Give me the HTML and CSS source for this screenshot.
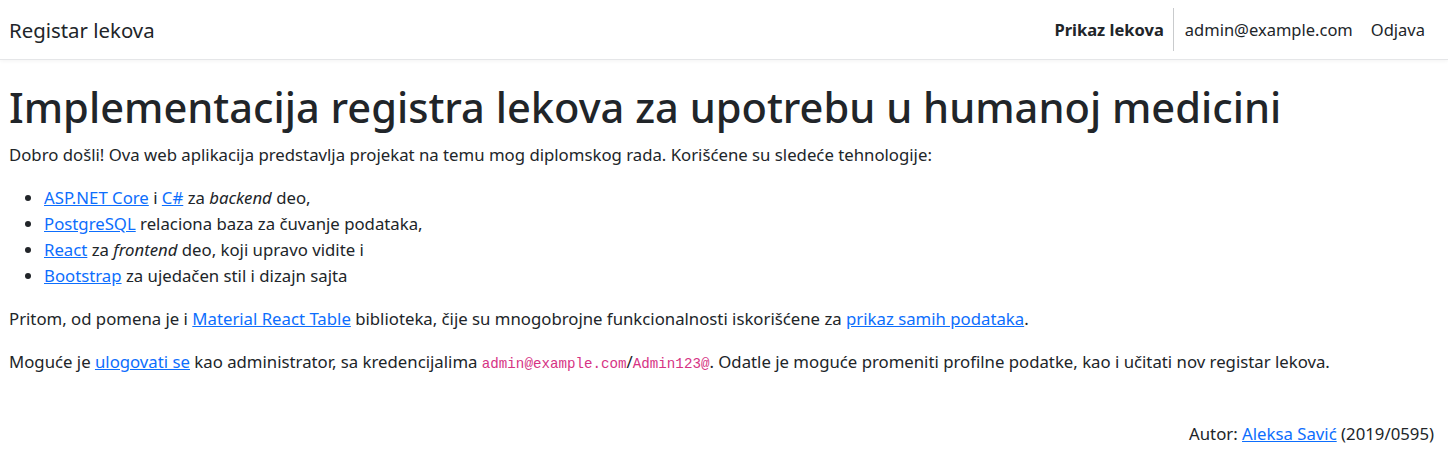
FILE: index.html
```html
<!DOCTYPE html>
<html lang="sr">
<head>
<meta charset="utf-8">
<title>Registar lekova</title>
<link rel="stylesheet" href="styles.css">
</head>
<body>
<header class="navbar">
  <a class="brand" href="#">Registar lekova</a>
  <nav class="nav">
    <a class="nav-link active" href="#">Prikaz lekova</a>
    <span class="nav-divider"></span>
    <a class="nav-link" href="#">admin@example.com</a>
    <a class="nav-link" href="#">Odjava</a>
  </nav>
</header>
<main class="content">
  <h1 class="title">Implementacija registra lekova za upotrebu u humanoj medicini</h1>
  <p class="para">Dobro došli! Ova web aplikacija predstavlja projekat na temu mog diplomskog rada. Korišćene su sledeće tehnologije:</p>
  <ul class="tech-list">
    <li><a href="#">ASP.NET Core</a> i <a href="#">C#</a> za <em>backend</em> deo,</li>
    <li><a href="#">PostgreSQL</a> relaciona baza za čuvanje podataka,</li>
    <li><a href="#">React</a> za <em>frontend</em> deo, koji upravo vidite i</li>
    <li><a href="#">Bootstrap</a> za ujedačen stil i dizajn sajta</li>
  </ul>
  <p class="para">Pritom, od pomena je i <a href="#">Material React Table</a> biblioteka, čije su mnogobrojne funkcionalnosti iskorišćene za <a href="#">prikaz samih podataka</a>.</p>
  <p class="para">Moguće je <a href="#">ulogovati se</a> kao administrator, sa kredencijalima <code class="code">admin@example.com</code>/<code class="code">Admin123@</code>. Odatle je moguće promeniti profilne podatke, kao i učitati nov registar lekova.</p>
</main>
<footer class="footer">Autor: <a href="#">Aleksa Savić</a> (2019/0595)</footer>
</body>
</html>
```

FILE: styles.css
```css
html, body {
  margin: 0;
  padding: 0;
  background: #fff;
}
body {
  font-family: "Segoe UI", "Noto Sans", sans-serif;
  font-size: 16.75px;
  line-height: 26px;
  color: #212529;
}
a {
  color: #0d6efd;
  text-decoration: underline;
}
.navbar {
  display: flex;
  align-items: center;
  justify-content: space-between;
  height: 59px;
  border-bottom: 1px solid #e5e6e8;
  box-shadow: 0 1px 4px rgba(0, 0, 0, 0.05);
  padding: 0 14px 0 9px;
}
.brand {
  font-size: 20.4px;
  color: #212529;
  text-decoration: none;
  line-height: 30px;
}
.nav {
  display: flex;
  align-items: center;
  height: 100%;
  font-size: 16.5px;
}
.nav-link {
  color: #212529;
  text-decoration: none;
  padding: 0 9px;
}
.nav-link.active {
  font-weight: 700;
  padding-left: 6px;
}
.nav-divider {
  width: 1px;
  height: 43px;
  background: #c9cbcd;
  margin: 0 2px 0 0;
}
.content {
  padding: 0 9px;
}
.title {
  margin: 21px 0 9px;
  font-size: 41.6px;
  line-height: 52px;
  font-weight: 500;
}
.para {
  margin: 0 0 17px;
}
.tech-list {
  margin: 0 0 17px;
  padding-left: 35px;
}
.para + .para {
  margin-top: 1px;
}
.code {
  font-family: "Liberation Mono", "DejaVu Sans Mono", monospace;
  font-size: 14.2px;
  color: #d63384;
}
.footer {
  text-align: right;
  padding: 27px 14px 0 0;
}
```
